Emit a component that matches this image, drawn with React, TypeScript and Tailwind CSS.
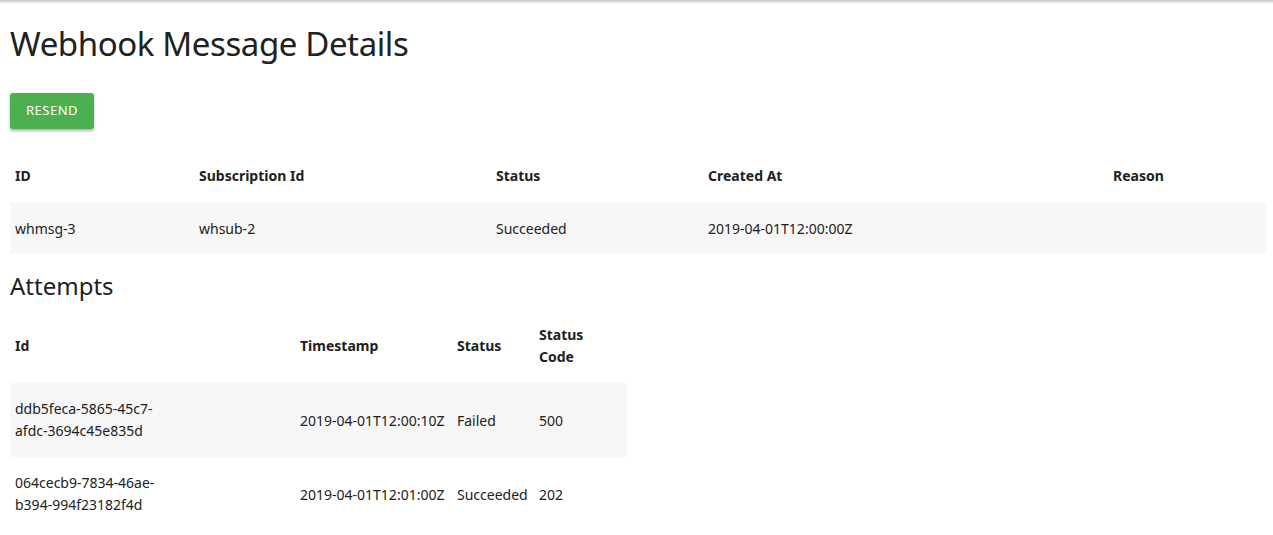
import React from "react";

export default function App() {
  return (
    <div className="min-h-[535px] bg-white text-[#212121] font-['Noto_Sans',sans-serif]">
      <div className="h-[4px] bg-gradient-to-b from-[#c8c8c8] to-white" />
      <div className="pl-[10px] pr-[7px]">
        <h1 className="mt-[19px] text-[33px] leading-[42px] font-normal tracking-[-0.4px]">Webhook Message Details</h1>
        <button className="mt-[28px] h-[36px] px-[16px] bg-[#4caf50] text-white text-[13px] uppercase tracking-[0.5px] rounded-[3px] shadow-[0_2px_3px_rgba(0,0,0,0.3)]">
          Resend
        </button>
        <table className="mt-[21px] w-full table-fixed border-collapse text-[14px] leading-[22px]">
          <colgroup>
            <col className="w-[184px]" />
            <col className="w-[297px]" />
            <col className="w-[212px]" />
            <col className="w-[405px]" />
            <col />
          </colgroup>
          <thead>
            <tr className="text-left">
              <th className="px-[5px] py-[15px] font-bold">ID</th>
              <th className="px-[5px] py-[15px] font-bold">Subscription Id</th>
              <th className="px-[5px] py-[15px] font-bold">Status</th>
              <th className="px-[5px] py-[15px] font-bold">Created At</th>
              <th className="px-[5px] py-[15px] font-bold">Reason</th>
            </tr>
          </thead>
          <tbody>
            <tr className="bg-[#f7f7f7]">
              <td className="px-[5px] pt-[16px] pb-[14px]">whmsg-3</td>
              <td className="px-[5px] pt-[16px] pb-[14px]">whsub-2</td>
              <td className="px-[5px] pt-[16px] pb-[14px]">Succeeded</td>
              <td className="px-[5px] pt-[16px] pb-[14px]">2019-04-01T12:00:00Z</td>
              <td className="px-[5px] pt-[16px] pb-[14px]"></td>
            </tr>
          </tbody>
        </table>
        <h2 className="mt-[16px] text-[24px] leading-[32px] font-normal">Attempts</h2>
        <table className="mt-[7px] w-[617px] table-fixed border-collapse text-[14px] leading-[22px]">
          <colgroup>
            <col className="w-[285px]" />
            <col className="w-[157px]" />
            <col className="w-[82px]" />
            <col className="w-[93px]" />
          </colgroup>
          <thead>
            <tr className="text-left">
              <th className="px-[5px] py-[15px] font-bold">Id</th>
              <th className="px-[5px] py-[15px] font-bold">Timestamp</th>
              <th className="px-[5px] py-[15px] font-bold">Status</th>
              <th className="pl-[5px] pr-[40px] py-[15px] font-bold">Status Code</th>
            </tr>
          </thead>
          <tbody>
            <tr className="bg-[#f7f7f7]">
              <td className="pl-[5px] pr-[120px] py-[15px] break-words">ddb5feca-5865-45c7-afdc-3694c45e835d</td>
              <td className="px-[5px] pt-[16px] pb-[14px] whitespace-nowrap">2019-04-01T12:00:10Z</td>
              <td className="px-[5px] pt-[16px] pb-[14px]">Failed</td>
              <td className="px-[5px] pt-[16px] pb-[14px]">500</td>
            </tr>
            <tr>
              <td className="pl-[5px] pr-[120px] py-[15px] break-words">064cecb9-7834-46ae-b394-994f23182f4d</td>
              <td className="px-[5px] pt-[16px] pb-[14px] whitespace-nowrap">2019-04-01T12:01:00Z</td>
              <td className="px-[5px] pt-[16px] pb-[14px]">Succeeded</td>
              <td className="px-[5px] pt-[16px] pb-[14px]">202</td>
            </tr>
          </tbody>
        </table>
      </div>
    </div>
  );
}
